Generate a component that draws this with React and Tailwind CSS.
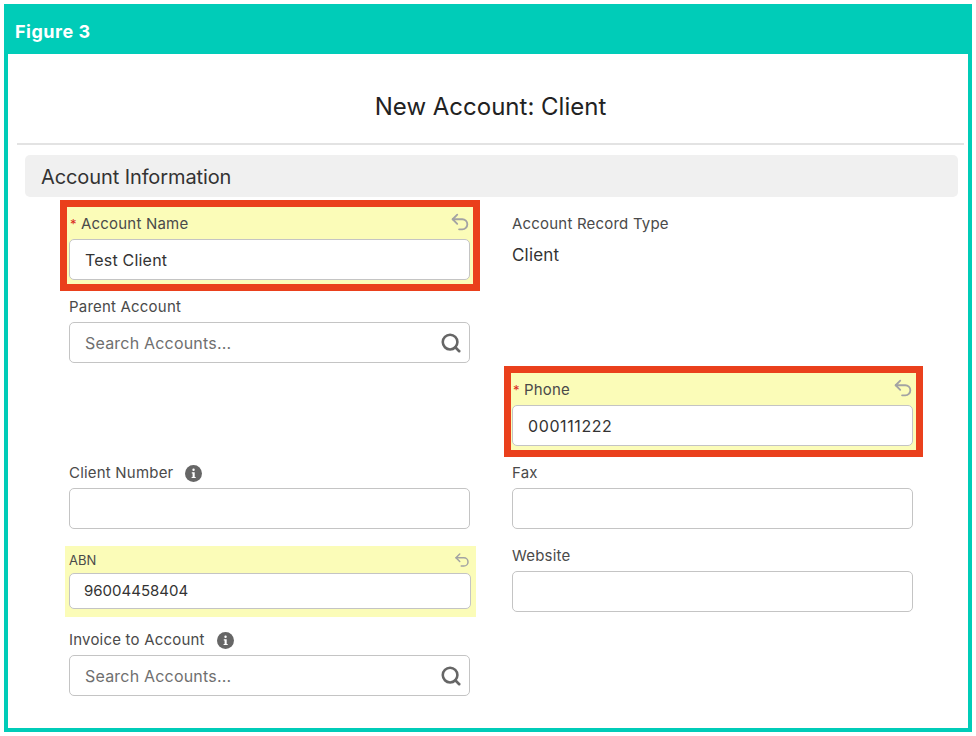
import { Search, Undo2 } from "lucide-react";

const font = "font-['Inter','Liberation_Sans',sans-serif]";

function InfoIcon() {
  return (
    <svg width="17" height="17" viewBox="0 0 17 17" className="ml-[12px] shrink-0">
      <circle cx="8.5" cy="8.5" r="8.5" fill="#666" />
      <rect x="7.4" y="3.6" width="2.3" height="2.3" rx="1" fill="#fff" />
      <path d="M6.8 7.3h2.9v4.6h1v1.2H6.6v-1.2h1V8.5h-.8z" fill="#fff" />
    </svg>
  );
}

function Label({ children, info }) {
  return (
    <div className="flex items-center h-[20px] text-[15px] tracking-[0.2px] text-[#4a4a4a]">
      {children}
      {info && <InfoIcon />}
    </div>
  );
}

function TextBox({ value, placeholder, search, wide }) {
  return (
    <div className="flex items-center justify-between h-[41px] px-[15px] rounded-[5px] border border-[#c4c4c4] bg-white text-[16px] tracking-[0.2px] text-[#333]">
      {value ? (
        <span className={wide ? "tracking-[0.6px]" : ""}>{value}</span>
      ) : (
        <span className="text-[#6f6f6f]">{placeholder}</span>
      )}
      {search && <Search size={22} strokeWidth={2.8} className="text-[#666] -mr-[8px]" />}
    </div>
  );
}

function Highlighted({ label, value, pad, wide }) {
  return (
    <div className={`h-[91px] border-[7px] border-[#ea401c] bg-[#fbfcb8] ${pad}`}>
      <div className="flex items-center justify-between h-[32px] pt-[3px] text-[15px] tracking-[0.2px] text-[#4a4a4a]">
        <span className="flex items-center">
          <span className="w-[12px] text-[#d9281e] text-[13px] pl-[1px]">*</span>
          {label}
        </span>
        <Undo2 size={22} strokeWidth={2} className="text-[#a3a3a3] -mt-[6px] -mr-px" />
      </div>
      <TextBox value={value} wide={wide} />
    </div>
  );
}

export default function App() {
  return (
    <div className={`w-[976px] h-[736px] bg-white p-1 ${font}`}>
      <div className="h-[728px] flex flex-col border-x-4 border-b-4 border-[#00ccb8]">
        <div className="-mx-1 h-[50px] shrink-0 flex items-center px-[11px] pt-[5px] bg-[#00ccb8] text-white text-[18px] font-bold tracking-[0.5px]">
          Figure 3
        </div>
        <div className="h-[91px] shrink-0 flex items-center justify-center pt-[17px] ml-[9px] mr-1 border-b-2 border-[#e3e3e3] text-[24px] text-[#222]">
          New Account: Client
        </div>
        <div className="mt-[10px] ml-[17px] mr-[10px] h-[42px] shrink-0 flex items-center px-4 pt-[2px] rounded-[5px] bg-[#f0f0f0] text-[20px] tracking-[-0.1px] text-[#333]">
          Account Information
        </div>
        <div className="mt-[3px] flex gap-[24px] pl-[52px]">
          <div className="w-[420px] flex flex-col">
            <Highlighted label="Account Name" value="Test Client" pad="pl-[2px] pr-[3px]" />
            <div className="mt-[6px] pl-[9px] pr-[10px]">
              <Label>Parent Account</Label>
              <div className="mt-[5px]">
                <TextBox placeholder="Search Accounts..." search />
              </div>
            </div>
            <div className="mt-[100px] pl-[9px] pr-[10px]">
              <Label info>Client Number</Label>
              <div className="mt-[5px]">
                <TextBox />
              </div>
            </div>
            <div className="mt-[17px] ml-[5px] mr-[4px] h-[71px] bg-[#fbfcb8] pl-[4px] pr-[5px] pb-[8px]">
              <div className="flex items-center justify-between h-[27px] pt-[2px] text-[13px] text-[#4a4a4a]">
                <span>ABN</span>
                <Undo2 size={18} strokeWidth={2} className="text-[#a3a3a3] -mt-[2px]" />
              </div>
              <div className="flex items-center h-[36px] px-[14px] rounded-[5px] border border-[#c4c4c4] bg-white text-[15px] text-[#333]">
                96004458404
              </div>
            </div>
            <div className="mt-[13px] pl-[9px] pr-[10px]">
              <Label info>Invoice to Account</Label>
              <div className="mt-[5px]">
                <TextBox placeholder="Search Accounts..." search />
              </div>
            </div>
          </div>
          <div className="w-[419px] flex flex-col">
            <div className="pl-[8px] pt-[14px] h-[166px]">
              <Label>Account Record Type</Label>
              <div className="mt-[9px] text-[17px] tracking-[0.2px] text-[#333]">Client</div>
            </div>
            <Highlighted label="Phone" value="000111222" pad="pl-px pr-[3px]" wide />
            <div className="mt-[6px] pl-[8px] pr-[10px]">
              <Label>Fax</Label>
              <div className="mt-[5px]">
                <TextBox />
              </div>
            </div>
            <div className="mt-[17px] pl-[8px] pr-[10px]">
              <Label>Website</Label>
              <div className="mt-[5px]">
                <TextBox />
              </div>
            </div>
          </div>
        </div>
      </div>
    </div>
  );
}
